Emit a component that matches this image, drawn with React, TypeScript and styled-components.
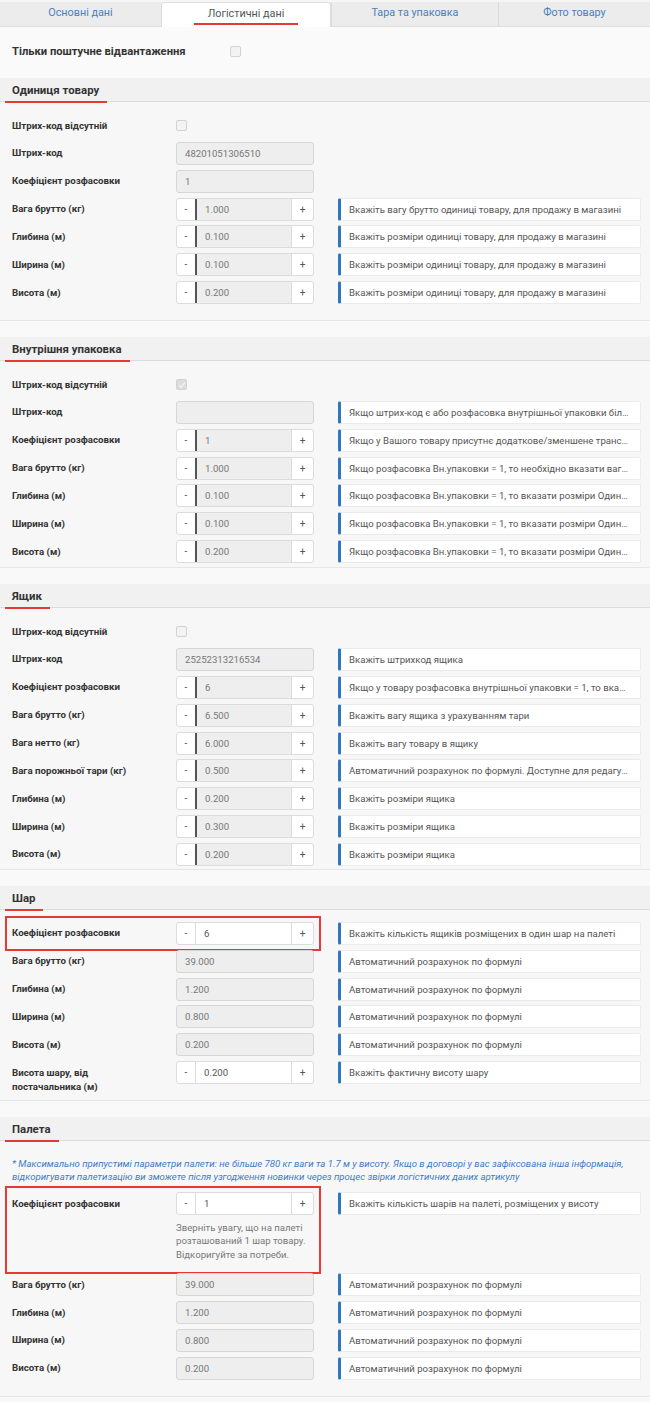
import React from 'react';
import styled, { createGlobalStyle, css } from 'styled-components';

const GlobalStyle = createGlobalStyle`
  html, body { margin: 0; padding: 0; background: #f9f9f9; }
  body { font-family: Roboto, "Noto Sans", "Liberation Sans", sans-serif; color: #333; }
  * { box-sizing: border-box; }
`;

const Page = styled.div`
  width: 650px;
  min-height: 1402px;
  background: #f9f9f9;
`;

const TabBar = styled.nav`
  display: flex;
  padding-top: 2px;
  background: #f6f6f6;
`;

const Tab = styled.div<{ $w: number; $active?: boolean }>`
  flex: 0 0 ${p => p.$w}px;
  height: 25px;
  display: flex;
  justify-content: center;
  padding-top: 4px;
  font-size: 10.8px;
  background: #ececec;
  color: #4a80c0;
  border-bottom: 1px solid #dedede;
  & + & { border-left: 1px solid #dcdcdc; }
  ${p => p.$active && css`
    background: #fff;
    color: #555;
    border: 1px solid #dedede;
    border-bottom: none;
    border-radius: 3px 3px 0 0;
    & + & { border-left: 1px solid #dedede; }
  `}
`;

const TabLabel = styled.span<{ $active?: boolean }>`
  display: inline-block;
  line-height: 14px;
  height: 18px;
  padding: 0 14px 2px;
  border-bottom: 2px solid ${p => (p.$active ? '#e53935' : 'transparent')};
`;

const TopRow = styled.div`
  display: flex;
  align-items: center;
  padding: 13px 12px 15px;
  height: 51px;
  background: #fafafa;
`;

const TopLabel = styled.span`
  flex: 0 0 218px;
  font-size: 11.2px;
  font-weight: 700;
  color: #333;
`;

const Box = styled.span<{ $checked?: boolean }>`
  display: inline-flex;
  align-items: center;
  justify-content: center;
  width: 11px;
  height: 11px;
  border: 1px solid #d2d2d2;
  border-radius: 2px;
  background: ${p => (p.$checked ? '#dcdcdc' : '#f3f3f3')};
  margin-top: 6px;
`;

const TopBox = styled(Box)`
  margin-top: 0;
`;

const Panel = styled.section<{ $pb: number }>`
  background: #f7f7f7;
  border-bottom: 1px solid #e6e6e6;
  margin-bottom: 16px;
  padding-bottom: ${p => p.$pb}px;
`;

const PanelHeader = styled.header`
  height: 24px;
  background: #f1f1f1;
  border-bottom: 1px solid #dcdcdc;
  display: flex;
  align-items: flex-end;
  padding-left: 5px;
`;

const PanelTitle = styled.h3`
  position: relative;
  z-index: 1;
  margin: 0 0 -2px;
  padding: 0 8px 4px 7px;
  font-size: 11.4px;
  line-height: 14px;
  font-weight: 700;
  color: #333;
  border-bottom: 2px solid #e53935;
`;

const PanelBody = styled.div`
  display: flex;
  flex-direction: column;
  gap: 4.85px;
  padding: 12px 9px 0 12px;
`;

const Row = styled.div`
  display: flex;
  align-items: flex-start;
  min-height: 23px;
`;

const Lead = styled.div<{ $marked?: boolean }>`
  flex: 0 0 302px;
  display: grid;
  grid-template-columns: 164px 138px;
  min-height: 23px;
  position: relative;
  ${p => p.$marked && css`
    &::before {
      content: '';
      position: absolute;
      inset: -6px -7px -6px -7px;
      border: 2px solid #e53935;
      pointer-events: none;
    }
  `}
`;

const Label = styled.div`
  font-size: 9.7px;
  font-weight: 700;
  line-height: 14px;
  padding: 4.5px 20px 0 0;
  color: #333;
`;

const Control = styled.div`
  display: flex;
  flex-direction: column;
`;

const ReadOnly = styled.div`
  height: 23px;
  background: #eee;
  border: 1px solid #d6d6d6;
  border-radius: 3px;
  padding: 0 8px;
  font-size: 9.6px;
  line-height: 21px;
  color: #777;
`;

const Stepper = styled.div`
  height: 23px;
  display: flex;
  border: 1px solid #dcdcdc;
  border-radius: 3px;
  background: #fff;
  overflow: hidden;
`;

const StepBtn = styled.span<{ $w: number }>`
  flex: 0 0 ${p => p.$w}px;
  display: flex;
  align-items: center;
  justify-content: center;
  font-size: 10px;
  color: #555;
`;

const StepValue = styled.span<{ $editable?: boolean }>`
  flex: 1;
  padding-left: 8px;
  font-size: 9.6px;
  line-height: 21px;
  border-right: 1px solid #dcdcdc;
  ${p => p.$editable
    ? css`background: #fff; color: #555; border-left: 1px solid #dcdcdc;`
    : css`background: #eee; color: #777; border-left: 2px solid #555;`}
`;

const Help = styled.div`
  font-size: 9.6px;
  line-height: 13.5px;
  color: #777;
  margin: 5.5px 0 7px;
`;

const Hint = styled.div`
  flex: 1;
  min-width: 0;
  margin-left: 24px;
  height: 23px;
  background: #fff;
  border: 1px solid #ebebeb;
  border-left: 3px solid #2f78bf;
  border-radius: 2px;
  padding: 0 8px;
  font-size: 9.6px;
  line-height: 21px;
  color: #555;
  white-space: nowrap;
  overflow: hidden;
  text-overflow: ellipsis;
`;

const Note = styled.p`
  margin: 4px 0 4px;
  font-size: 9.6px;
  line-height: 13.5px;
  font-style: italic;
  color: #3f7cc4;
`;

type Field =
  | { kind: 'check'; label: string; checked?: boolean }
  | { kind: 'ro'; label: React.ReactNode; value: string; hint?: string }
  | { kind: 'step'; label: React.ReactNode; value: string; hint?: string; editable?: boolean; marked?: boolean; help?: string };

const Check = ({ checked, top }: { checked?: boolean; top?: boolean }) => {
  const Comp = top ? TopBox : Box;
  return (
    <Comp $checked={checked}>
      {checked && (
        <svg width="8" height="8" viewBox="0 0 8 8">
          <path d="M1.2 4.2 L3.2 6.1 L6.9 1.8" fill="none" stroke="#f4f4f4" strokeWidth="1.4" />
        </svg>
      )}
    </Comp>
  );
};

const FieldRow = ({ f }: { f: Field }) => {
  if (f.kind === 'check') {
    return (
      <Row>
        <Lead>
          <Label>{f.label}</Label>
          <Control>
            <Check checked={f.checked} />
          </Control>
        </Lead>
      </Row>
    );
  }
  if (f.kind === 'ro') {
    return (
      <Row>
        <Lead>
          <Label>{f.label}</Label>
          <Control>
            <ReadOnly>{f.value}</ReadOnly>
          </Control>
        </Lead>
        {f.hint && <Hint>{f.hint}</Hint>}
      </Row>
    );
  }
  return (
    <Row>
      <Lead $marked={f.marked}>
        <Label>{f.label}</Label>
        <Control>
          <Stepper>
            <StepBtn $w={18}>-</StepBtn>
            <StepValue $editable={f.editable}>{f.value}</StepValue>
            <StepBtn $w={21}>+</StepBtn>
          </Stepper>
          {f.help && <Help>{f.help}</Help>}
        </Control>
      </Lead>
      {f.hint && <Hint>{f.hint}</Hint>}
    </Row>
  );
};

const AUTO = 'Автоматичний розрахунок по формулі';
const UNIT_SIZE = 'Вкажіть розміри одиниці товару, для продажу в магазині';
const INNER_SIZE = 'Якщо розфасовка Вн.упаковки = 1, то вказати розміри Одиниці товару';
const BOX_SIZE = 'Вкажіть розміри ящика';

const sections: { title: string; pb: number; note?: string; fields: Field[] }[] = [
  {
    title: 'Одиниця товару',
    pb: 16,
    fields: [
      { kind: 'check', label: 'Штрих-код відсутній' },
      { kind: 'ro', label: 'Штрих-код', value: '48201051306510' },
      { kind: 'ro', label: 'Коефіцієнт розфасовки', value: '1' },
      { kind: 'step', label: 'Вага брутто (кг)', value: '1.000', hint: 'Вкажіть вагу брутто одиниці товару, для продажу в магазині' },
      { kind: 'step', label: 'Глибина (м)', value: '0.100', hint: UNIT_SIZE },
      { kind: 'step', label: 'Ширина (м)', value: '0.100', hint: UNIT_SIZE },
      { kind: 'step', label: 'Висота (м)', value: '0.200', hint: UNIT_SIZE },
    ],
  },
  {
    title: 'Внутрішня упаковка',
    pb: 4,
    fields: [
      { kind: 'check', label: 'Штрих-код відсутній', checked: true },
      { kind: 'ro', label: 'Штрих-код', value: '', hint: 'Якщо штрих-код є або розфасовка внутрішньої упаковки більше 1, вкажіть штрих-код' },
      { kind: 'step', label: 'Коефіцієнт розфасовки', value: '1', hint: 'Якщо у Вашого товару присутнє додаткове/зменшене транспортне пакування, вкажіть кількість' },
      { kind: 'step', label: 'Вага брутто (кг)', value: '1.000', hint: 'Якщо розфасовка Вн.упаковки = 1, то необхідно вказати вагу одиниці товару' },
      { kind: 'step', label: 'Глибина (м)', value: '0.100', hint: INNER_SIZE },
      { kind: 'step', label: 'Ширина (м)', value: '0.100', hint: INNER_SIZE },
      { kind: 'step', label: 'Висота (м)', value: '0.200', hint: INNER_SIZE },
    ],
  },
  {
    title: 'Ящик',
    pb: 3,
    fields: [
      { kind: 'check', label: 'Штрих-код відсутній' },
      { kind: 'ro', label: 'Штрих-код', value: '25252313216534', hint: 'Вкажіть штрихкод ящика' },
      { kind: 'step', label: 'Коефіцієнт розфасовки', value: '6', hint: 'Якщо у товару розфасовка внутрішньої упаковки = 1, то вкажіть кількість одиниць товару' },
      { kind: 'step', label: 'Вага брутто (кг)', value: '6.500', hint: 'Вкажіть вагу ящика з урахуванням тари' },
      { kind: 'step', label: 'Вага нетто (кг)', value: '6.000', hint: 'Вкажіть вагу товару в ящику' },
      { kind: 'step', label: 'Вага порожньої тари (кг)', value: '0.500', hint: 'Автоматичний розрахунок по формулі. Доступне для редагування' },
      { kind: 'step', label: 'Глибина (м)', value: '0.200', hint: BOX_SIZE },
      { kind: 'step', label: 'Ширина (м)', value: '0.300', hint: BOX_SIZE },
      { kind: 'step', label: 'Висота (м)', value: '0.200', hint: BOX_SIZE },
    ],
  },
  {
    title: 'Шар',
    pb: 6,
    fields: [
      { kind: 'step', label: 'Коефіцієнт розфасовки', value: '6', editable: true, marked: true, hint: 'Вкажіть кількість ящиків розміщених в один шар на палеті' },
      { kind: 'ro', label: 'Вага брутто (кг)', value: '39.000', hint: AUTO },
      { kind: 'ro', label: 'Глибина (м)', value: '1.200', hint: AUTO },
      { kind: 'ro', label: 'Ширина (м)', value: '0.800', hint: AUTO },
      { kind: 'ro', label: 'Висота (м)', value: '0.200', hint: AUTO },
      { kind: 'step', label: 'Висота шару, від постачальника (м)', value: '0.200', editable: true, hint: 'Вкажіть фактичну висоту шару' },
    ],
  },
  {
    title: 'Палета',
    pb: 16,
    note: '* Максимально припустимі параметри палети: не більше 780 кг ваги та 1.7 м у висоту. Якщо в договорі у вас зафіксована інша інформація, відкоригувати палетизацію ви зможете після узгодження новинки через процес звірки логістичних даних артикулу',
    fields: [
      { kind: 'step', label: 'Коефіцієнт розфасовки', value: '1', editable: true, marked: true, hint: 'Вкажіть кількість шарів на палеті, розміщених у висоту', help: 'Зверніть увагу, що на палеті розташований 1 шар товару. Відкоригуйте за потреби.' },
      { kind: 'ro', label: 'Вага брутто (кг)', value: '39.000', hint: AUTO },
      { kind: 'ro', label: 'Глибина (м)', value: '1.200', hint: AUTO },
      { kind: 'ro', label: 'Ширина (м)', value: '0.800', hint: AUTO },
      { kind: 'ro', label: 'Висота (м)', value: '0.200', hint: AUTO },
    ],
  },
];

const tabs = [
  { label: 'Основні дані', w: 161 },
  { label: 'Логістичні дані', w: 170, active: true },
  { label: 'Тара та упаковка', w: 167 },
  { label: 'Фото товару', w: 152 },
];

export default function App() {
  return (
    <Page>
      <GlobalStyle />
      <TabBar>
        {tabs.map(t => (
          <Tab key={t.label} $w={t.w} $active={t.active}>
            <TabLabel $active={t.active}>{t.label}</TabLabel>
          </Tab>
        ))}
      </TabBar>
      <TopRow>
        <TopLabel>Тільки поштучне відвантаження</TopLabel>
        <Check top />
      </TopRow>
      {sections.map(s => (
        <Panel key={s.title} $pb={s.pb}>
          <PanelHeader>
            <PanelTitle>{s.title}</PanelTitle>
          </PanelHeader>
          <PanelBody>
            {s.note && <Note>{s.note}</Note>}
            {s.fields.map((f, i) => (
              <FieldRow key={i} f={f} />
            ))}
          </PanelBody>
        </Panel>
      ))}
    </Page>
  );
}
